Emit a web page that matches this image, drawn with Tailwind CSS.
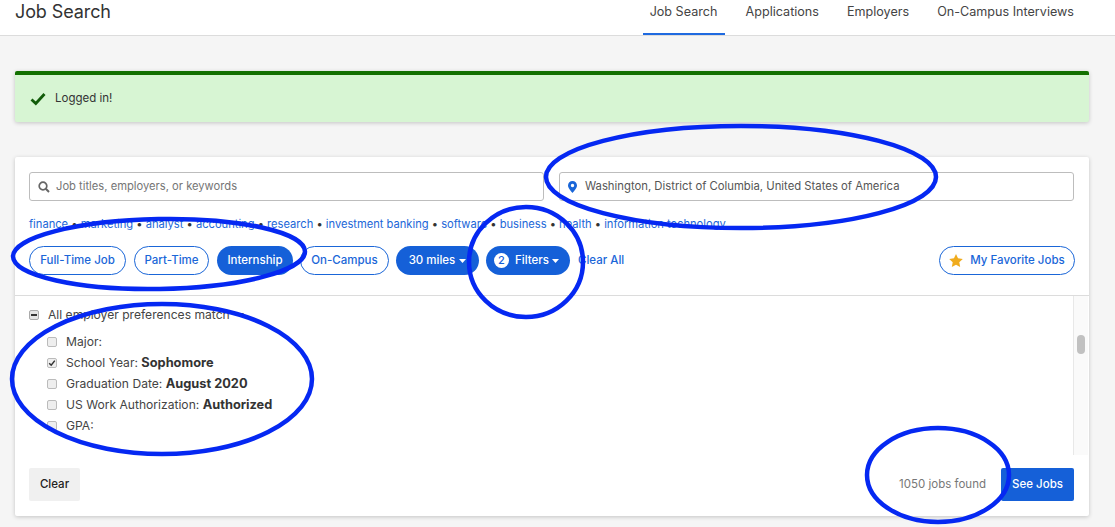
<!DOCTYPE html>
<html lang="en">
<head>
    <meta charset="UTF-8">
    <title>Job Search</title>
    <script src="https://cdn.jsdelivr.net/npm/@tailwindcss/browser@4"></script>
</head>
<body class="bg-[#f5f5f5] font-['Inter',sans-serif] text-[#333] relative h-[527px] overflow-hidden">

    <!-- header -->
    <header class="bg-white h-[36px] border-b border-[#dcdcdc] flex justify-between pl-[15px] pr-[28px]">
        <h1 class="text-[18px] leading-[24px] -tracking-[0.1px] font-normal">Job Search</h1>
        <nav class="flex gap-[2px] text-[12.6px] leading-[24px] text-[#444]">
            <a class="w-[82px] mr-[6px] text-center border-b-2 border-[#1f6ae0] h-[35px]">Job Search</a>
            <a class="px-[13px]">Applications</a>
            <a class="px-[13px]">Employers</a>
            <a class="px-[13px]">On-Campus Interviews</a>
        </nav>
    </header>

    <!-- alert -->
    <div class="mt-[35px] mx-[15px] w-[1074px] h-[51px] bg-[#d7f5d3] border-t-4 border-[#127000] rounded-[2px] shadow-[0_1px_4px_rgba(0,0,0,0.2)] flex items-center pl-[15px] gap-[9px] text-[11.5px]">
        <svg class="w-[16px] h-[14px]" viewBox="0 0 16 14"><path d="M1.5 7.5 L5.8 11.5 L14.5 2" fill="none" stroke="#125c0a" stroke-width="2.8"/></svg>
        <span class="text-[#333]">Logged in!</span>
    </div>

    <!-- search card -->
    <main class="mt-[35px] mx-[15px] w-[1074px] h-[359px] bg-white rounded-[2px] shadow-[0_1px_4px_rgba(0,0,0,0.2)] flex flex-col">
        <div class="px-[14px] pt-[15px] h-[139px] border-b border-[#dcdcdc] shrink-0">
            <div class="flex gap-[15px]">
                <div class="w-[515px] h-[29px] border border-[#bdbdbd] rounded-[3px] flex items-center pl-[8px] gap-[6px] text-[11.2px] text-[#757575]">
                    <svg class="w-[12px] h-[12px]" viewBox="0 0 12 12"><circle cx="5" cy="5" r="3.8" fill="none" stroke="#666" stroke-width="1.7"/><path d="M7.8 7.8 L11 11" stroke="#666" stroke-width="2"/></svg>
                    <span>Job titles, employers, or keywords</span>
                </div>
                <div class="w-[515px] h-[29px] border border-[#bdbdbd] rounded-[3px] flex items-center pl-[8px] gap-[8px] text-[11.3px] text-[#555]">
                    <svg class="w-[9px] h-[12px]" viewBox="0 0 9 12"><path fill-rule="evenodd" d="M4.5 0 C7 0 9 2 9 4.4 C9 7 6 10 4.5 12 C3 10 0 7 0 4.4 C0 2 2 0 4.5 0 Z M4.5 2.8 A1.7 1.7 0 1 0 4.5 6.2 A1.7 1.7 0 1 0 4.5 2.8 Z" fill="#1a66d8"/></svg>
                    <span>Washington, District of Columbia, United States of America</span>
                </div>
            </div>
            <div class="mt-[14px] text-[11.15px] leading-[18px] text-[#1a66d8] whitespace-nowrap">
                finance <span class="text-[#333]">•</span> marketing <span class="text-[#333]">•</span> analyst <span class="text-[#333]">•</span> accounting <span class="text-[#333]">•</span> research <span class="text-[#333]">•</span> investment banking <span class="text-[#333]">•</span> software <span class="text-[#333]">•</span> business <span class="text-[#333]">•</span> health <span class="text-[#333]">•</span> information technology
            </div>
            <div class="mt-[13px] flex items-center text-[11.5px] font-medium h-[29px]">
                <a class="w-[97px] h-[29px] flex items-center justify-center rounded-full border border-[#1a66d8] text-[#1a66d8]">Full-Time Job</a>
                <a class="ml-[8px] w-[75px] h-[29px] flex items-center justify-center rounded-full border border-[#1a66d8] text-[#1a66d8]">Part-Time</a>
                <a class="ml-[8px] w-[76px] h-[29px] flex items-center justify-center rounded-full bg-[#1560d8] text-white">Internship</a>
                <a class="ml-[7px] w-[89px] h-[29px] flex items-center justify-center rounded-full border border-[#1a66d8] text-[#1a66d8]">On-Campus</a>
                <a class="ml-[7px] w-[83px] h-[29px] flex items-center justify-center gap-[4px] rounded-full bg-[#1560d8] text-white">30 miles
                    <svg class="w-[7px] h-[4px]" viewBox="0 0 7 4"><path d="M0 0 H7 L3.5 4 Z" fill="#fff"/></svg>
                </a>
                <a class="ml-[7px] w-[84px] h-[29px] flex items-center pl-[8px] gap-[6px] rounded-full bg-[#1560d8] text-white">
                    <span class="w-[15px] h-[15px] rounded-full bg-white text-[#1560d8] flex items-center justify-center text-[11px]">2</span>
                    <span class="flex items-center gap-[3px]">Filters
                        <svg class="w-[7px] h-[4px]" viewBox="0 0 7 4"><path d="M0 0 H7 L3.5 4 Z" fill="#fff"/></svg>
                    </span>
                </a>
                <a class="ml-[8px] text-[#1a66d8]">Clear All</a>
                <a class="ml-auto w-[136px] h-[29px] flex items-center justify-center gap-[7px] rounded-full border border-[#1a66d8] text-[#1a66d8]">
                    <svg class="w-[14px] h-[13px]" viewBox="0 0 24 23"><path d="M12 0 L15.6 7.6 L24 8.7 L17.8 14.5 L19.4 23 L12 18.8 L4.6 23 L6.2 14.5 L0 8.7 L8.4 7.6 Z" fill="#f0ac1e"/></svg>
                    My Favorite Jobs
                </a>
            </div>
        </div>

        <div class="flex h-[159px] shrink-0">
            <div class="flex-1 pl-[14px] pt-[11px] text-[12.1px] text-[#444]">
                <div class="flex items-center gap-[9px] leading-[16px]">
                    <span class="w-[10px] h-[10px] bg-[#e4e4e4] border border-[#aaa] rounded-[2px] flex items-center justify-center"><span class="w-[6px] h-[2px] bg-[#333]"></span></span>
                    All employer preferences match
                    <svg class="w-[7px] h-[4px] -ml-[2px]" viewBox="0 0 7 4"><path d="M0 0 H7 L3.5 4 Z" fill="#555"/></svg>
                </div>
                <ul class="mt-[11px] ml-[18px] flex flex-col gap-[5px] leading-[16px]">
                    <li class="flex items-center gap-[9px]"><span class="w-[10px] h-[10px] bg-[#eee] border border-[#bbb] rounded-[2px]"></span><span>Major:</span></li>
                    <li class="flex items-center gap-[9px]"><span class="w-[10px] h-[10px] bg-[#eee] border border-[#bbb] rounded-[2px] flex items-center justify-center"><svg class="w-[8px] h-[8px]" viewBox="0 0 8 8"><path d="M1.2 4.2 L3.2 6.2 L6.8 1.6" fill="none" stroke="#333" stroke-width="1.5"/></svg></span><span>School Year: <b class="font-bold text-[12.8px] text-[#333]">Sophomore</b></span></li>
                    <li class="flex items-center gap-[9px]"><span class="w-[10px] h-[10px] bg-[#eee] border border-[#bbb] rounded-[2px]"></span><span>Graduation Date: <b class="font-bold text-[12.8px] text-[#333]">August 2020</b></span></li>
                    <li class="flex items-center gap-[9px]"><span class="w-[10px] h-[10px] bg-[#eee] border border-[#bbb] rounded-[2px]"></span><span>US Work Authorization: <b class="font-bold text-[12.8px] text-[#333]">Authorized</b></span></li>
                    <li class="flex items-center gap-[9px]"><span class="w-[10px] h-[10px] bg-[#eee] border border-[#bbb] rounded-[2px]"></span><span>GPA:</span></li>
                </ul>
            </div>
            <!-- scrollbar -->
            <div class="w-[15px] mr-[1px] bg-[#fafafa] border-l border-[#e8e8e8] pt-[39px] pl-[3px]">
                <div class="w-[8px] h-[19px] rounded-full bg-[#c1c1c1]"></div>
            </div>
        </div>

        <div class="flex items-center pl-[14px] pr-[15px] pt-[13px]">
            <button class="w-[51px] h-[33px] bg-[#f0f0f0] rounded-[2px] text-[11.5px] font-medium text-[#222]">Clear</button>
            <span class="ml-auto text-[11.5px] text-[#777]">1050 jobs found</span>
            <button class="ml-[15px] w-[73px] h-[33px] bg-[#1560d8] rounded-[2px] text-[11.5px] font-medium text-white">See Jobs</button>
        </div>
    </main>

    <!-- hand-drawn annotation circles -->
    <svg class="absolute inset-0 w-[1115px] h-[527px] pointer-events-none" viewBox="0 0 1115 527" fill="none" stroke="#0528f2" stroke-width="4.5">
        <ellipse cx="741" cy="177" rx="195" ry="51"/>
        <ellipse cx="159" cy="254" rx="146" ry="35" transform="rotate(-1 159 254)"/>
        <ellipse cx="526" cy="262" rx="57" ry="55"/>
        <ellipse cx="162" cy="379" rx="150" ry="75"/>
        <ellipse cx="938" cy="475" rx="71" ry="47"/>
    </svg>
</body>
</html>
